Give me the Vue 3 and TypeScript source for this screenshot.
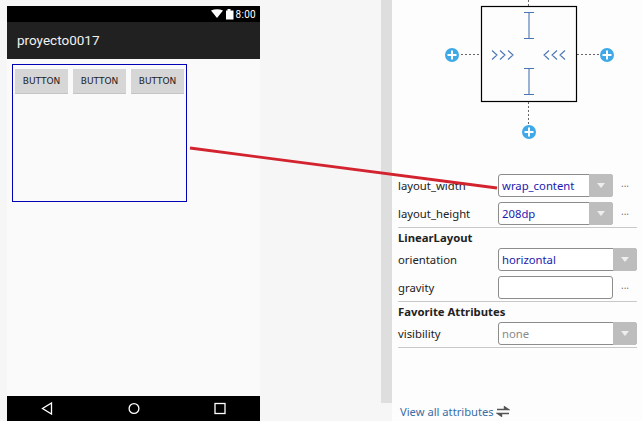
<template>
  <div class="screen">
    <div class="phone">
      <div class="status-bar">
        <svg class="status-icons" width="48" height="12" viewBox="0 0 48 12">
          <path d="M0 1.5 Q6 -1 12 1.5 L6 9 Z" fill="#fff" />
          <path d="M15 2 H16.5 V0.5 H19.5 V2 H22.5 V11 H15 Z" fill="#fff" transform="translate(0 -0.5)" />
        </svg>
        <span class="clock">8:00</span>
      </div>
      <div class="app-bar">proyecto0017</div>
      <div class="content">
        <div class="linear">
          <div v-for="n in 3" :key="n" class="btn">BUTTON</div>
        </div>
      </div>
      <div class="nav-bar">
        <svg width="12" height="13" viewBox="0 0 12 13"><path d="M10.5 1 V12 L1.5 6.5 Z" fill="none" stroke="#fff" stroke-width="1.3" /></svg>
        <svg width="12" height="13" viewBox="0 0 12 13"><circle cx="6" cy="6.5" r="4.9" fill="none" stroke="#fff" stroke-width="1.3" /></svg>
        <svg width="12" height="13" viewBox="0 0 12 13"><rect x="1" y="1.5" width="10" height="10" fill="none" stroke="#fff" stroke-width="1.3" /></svg>
      </div>
    </div>

    <div class="strip"></div>

    <div class="panel">
      <svg class="inspector" width="250" height="168" viewBox="392 0 250 168">
        <rect x="481.5" y="6.5" width="95" height="95" fill="none" stroke="#000" stroke-width="1.2" />
        <g stroke="#666" stroke-dasharray="2 2" fill="none">
          <path d="M528.5 0 V6 M528.5 102 V124 M461 54.5 H481 M577 54.5 H599" />
        </g>
        <g stroke="#4a76b4" stroke-width="1.1" fill="none">
          <path d="M524 12.5 H534 M529 12.5 V38.5 M524 38.5 H534" />
          <path d="M524 68.5 H534 M529 68.5 V94.5 M524 94.5 H534" />
          <path d="M492 50.5 L497 55 L492 59.5 M500 50.5 L505 55 L500 59.5 M508 50.5 L513 55 L508 59.5" />
          <path d="M549 50.5 L544 55 L549 59.5 M557 50.5 L552 55 L557 59.5 M565 50.5 L560 55 L565 59.5" />
        </g>
        <g v-for="p in plusIcons" :key="p.x">
          <circle :cx="p.x" :cy="p.y" r="7" fill="#3fa9e8" />
          <path :d="`M${p.x - 4.5} ${p.y} H${p.x + 4.5} M${p.x} ${p.y - 4.5} V${p.y + 4.5}`" stroke="#fff" stroke-width="2" />
        </g>
      </svg>

      <div class="rows">
        <div class="row">
          <label>layout_width</label>
          <div class="select short"><span>wrap_content</span><i class="arrow"></i></div>
          <span class="more">...</span>
        </div>
        <div class="row">
          <label>layout_height</label>
          <div class="select short"><span>208dp</span><i class="arrow"></i></div>
          <span class="more">...</span>
        </div>
        <div class="section">LinearLayout</div>
        <div class="row">
          <label>orientation</label>
          <div class="select"><span>horizontal</span><i class="arrow"></i></div>
        </div>
        <div class="row">
          <label>gravity</label>
          <div class="select short input"></div>
          <span class="more">...</span>
        </div>
        <div class="section">Favorite Attributes</div>
        <div class="row">
          <label>visibility</label>
          <div class="select muted"><span>none</span><i class="arrow"></i></div>
        </div>
        <div class="rule"></div>
      </div>

      <div class="footer">
        <a class="view-all">View all attributes</a>
        <svg width="14" height="11" viewBox="0 0 14 11">
          <path d="M1 3.5 H10 M8.5 0.8 L12.5 3.5 H8.5 Z M13 7.5 H4 M5.5 10.2 L1.5 7.5 H5.5 Z" stroke="#555" stroke-width="1.4" fill="#555" />
        </svg>
      </div>
    </div>

    <svg class="pointer" width="642" height="421" viewBox="0 0 642 421">
      <path d="M190 148 L497 188" stroke="#d2232f" stroke-width="2.8" />
    </svg>
  </div>
</template>

<script setup lang="ts">
interface Point { x: number; y: number }

const plusIcons: Point[] = [
  { x: 452, y: 55 },
  { x: 607, y: 55 },
  { x: 529, y: 132 },
]
</script>

<style>
html, body { margin: 0; background: #f5f5f5; }
</style>

<style scoped>
.screen {
  position: relative;
  display: flex;
  width: 642px;
  height: 421px;
  overflow: hidden;
  background: #f6f6f6;
  font-family: "Noto Sans", "Open Sans", sans-serif;
}
.phone {
  display: flex;
  flex-direction: column;
  width: 253px;
  margin: 6px 0 0 7px;
  flex: none;
}
.status-bar {
  height: 16px;
  background: #000;
  display: flex;
  align-items: center;
  justify-content: flex-end;
  padding-right: 4px;
  color: #fff;
}
.status-icons { margin-right: -23px; margin-top: 2px; }
.clock { font: 10px "Roboto", sans-serif; letter-spacing: 0.3px; }
.app-bar {
  height: 37px;
  background: #212121;
  color: #f2f2f2;
  font: 13.5px/37px "Roboto", sans-serif;
  padding-left: 10px;
}
.content {
  flex: 1;
  background: #fafafa;
  padding: 5px;
}
.linear {
  display: flex;
  gap: 5px;
  width: 175px;
  height: 138px;
  padding: 4px 2px;
  box-sizing: border-box;
  border: 1px solid #0000b4;
}
.btn {
  width: 53px;
  height: 24px;
  background: #d6d6d6;
  box-shadow: 0 1px 0 #c4c4c4;
  color: #222;
  font: 9px/24px "DejaVu Sans", sans-serif;
  text-align: center;
}
.nav-bar {
  height: 25px;
  background: #000;
  display: flex;
  justify-content: space-between;
  align-items: center;
  padding: 0 34px;
}
.strip {
  width: 11px;
  margin-left: 121px;
  flex: none;
  height: 403px;
  background: #dedede;
}
.panel {
  flex: 1;
  background: #fdfdfd;
  display: flex;
  flex-direction: column;
  font-size: 11.3px;
  color: #222;
  min-width: 0;
}
.inspector { display: block; flex: none; height: 168px; }
.rows { padding: 6px 5px 0 6px; }
.row {
  display: flex;
  align-items: center;
  height: 23px;
}
.row + .row { margin-top: 5px; }
.row label { width: 100px; flex: none; }
.select {
  position: relative;
  box-sizing: border-box;
  width: 139px;
  height: 23px;
  border: 1px solid #8c8c8c;
  border-radius: 3px;
  background: #fff;
  color: #1a1ab0;
  padding-left: 3px;
  line-height: 21px;
}
.select.short { width: 115px; }
.select.muted { color: #8a8a8a; }
.arrow {
  position: absolute;
  top: -1px;
  right: -1px;
  bottom: -1px;
  width: 24px;
  background: #bdbdbd;
  border-radius: 0 3px 3px 0;
}
.arrow::after {
  content: "";
  position: absolute;
  left: 8px;
  top: 9px;
  border-left: 4px solid transparent;
  border-right: 4px solid transparent;
  border-top: 5px solid #eee;
}
.more {
  margin-left: 8px;
  color: #777;
  font-size: 10px;
  line-height: 10px;
  margin-top: -6px;
}
.section {
  border-top: 1px solid #c8c8c8;
  height: 20px;
  line-height: 20px;
  font-weight: 700;
  margin-top: 2px;
}
.rule { border-top: 1px solid #c8c8c8; margin-top: 2px; }
.footer {
  margin-top: auto;
  display: flex;
  align-items: center;
  gap: 2px;
  height: 20px;
  padding-left: 8px;
}
.view-all { color: #3a6ea5; font-size: 11.2px; }
.pointer { position: absolute; inset: 0; pointer-events: none; }
</style>
